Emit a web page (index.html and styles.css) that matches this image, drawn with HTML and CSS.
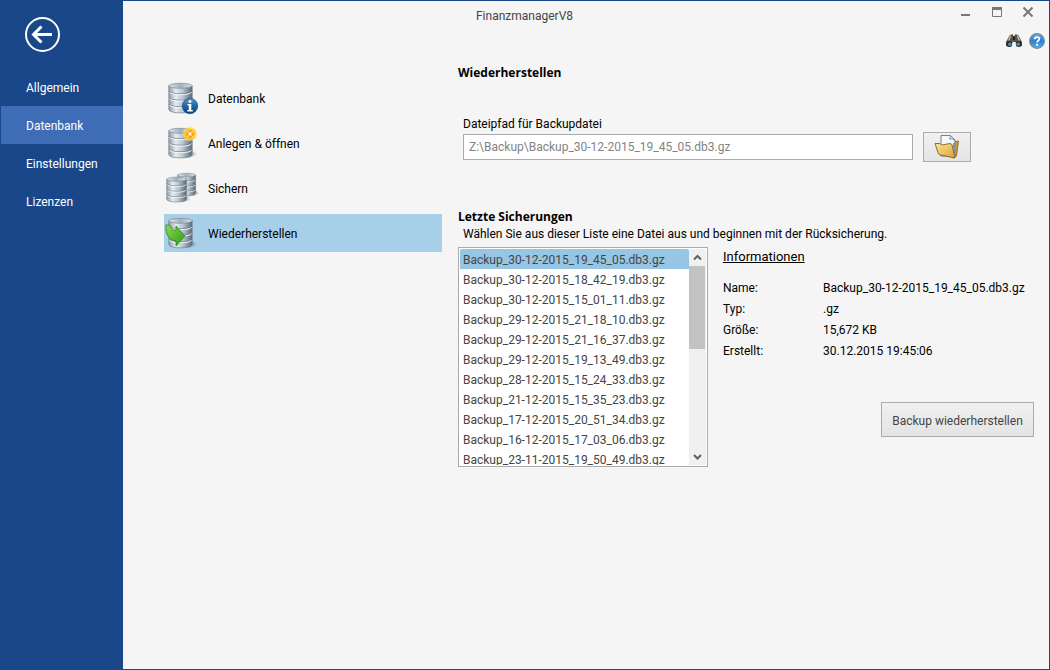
FILE: index.html
```html
<!DOCTYPE html>
<html lang="de">
<head>
<meta charset="utf-8">
<title>FinanzmanagerV8</title>
<link rel="stylesheet" href="styles.css">
</head>
<body>
<svg class="defs" aria-hidden="true">
  <defs>
    <linearGradient id="metal" x1="0" x2="1" y1="0" y2="0">
      <stop offset="0" stop-color="#8c9aa6"/>
      <stop offset=".3" stop-color="#e6ecf1"/>
      <stop offset=".6" stop-color="#b9c4cd"/>
      <stop offset="1" stop-color="#566877"/>
    </linearGradient>
    <linearGradient id="lid" x1="0" x2="1" y1="0" y2="0">
      <stop offset="0" stop-color="#dfe6eb"/>
      <stop offset=".5" stop-color="#9fb0bd"/>
      <stop offset="1" stop-color="#dde5ea"/>
    </linearGradient>
    <radialGradient id="shade">
      <stop offset="0" stop-color="#000" stop-opacity=".6"/>
      <stop offset="1" stop-color="#000" stop-opacity="0"/>
    </radialGradient>
    <radialGradient id="glow">
      <stop offset="0" stop-color="#ff9414"/>
      <stop offset=".4" stop-color="#ffa51c"/>
      <stop offset=".7" stop-color="#ffd23c" stop-opacity=".9"/>
      <stop offset="1" stop-color="#ffe873" stop-opacity="0"/>
    </radialGradient>
    <linearGradient id="blue" x1="0" x2="0" y1="0" y2="1">
      <stop offset="0" stop-color="#5c9bd0"/>
      <stop offset=".5" stop-color="#1d66a8"/>
      <stop offset="1" stop-color="#0e4278"/>
    </linearGradient>
    <linearGradient id="sky" x1="0" x2="0" y1="0" y2="1">
      <stop offset="0" stop-color="#69afe6"/>
      <stop offset=".5" stop-color="#2a7fcd"/>
      <stop offset="1" stop-color="#58b4f0"/>
    </linearGradient>
    <linearGradient id="green" x1="0" x2="1" y1="0" y2="1">
      <stop offset="0" stop-color="#8fdc4c"/>
      <stop offset="1" stop-color="#2c9a1c"/>
    </linearGradient>
    <linearGradient id="gold" x1="0" x2="1" y1="0" y2="1">
      <stop offset="0" stop-color="#ffe49a"/>
      <stop offset="1" stop-color="#d9a032"/>
    </linearGradient>
    <symbol id="drum" viewBox="0 0 26 32" overflow="visible">
      <ellipse cx="18" cy="27" rx="11" ry="4.500" fill="url(#shade)"/>
      <path d="M.8 3.500v24c0 4.500 23.400 4.500 23.400 0v-24z" fill="url(#metal)" stroke="#74838f" stroke-width=".7"/>
      <ellipse cx="12.500" cy="3.800" rx="11.600" ry="2.500" fill="url(#lid)" stroke="#7d8b97" stroke-width=".7"/>
      <path d="M1 9c0 3.600 23 3.600 23 0M1 15.500c0 3.600 23 3.600 23 0M1 22c0 3.600 23 3.600 23 0" fill="none" stroke="#657685" stroke-width=".7"/>
      <path d="M1.500 10c0 3.600 22 3.600 22 0M1.500 16.500c0 3.600 22 3.600 22 0M1.500 23c0 3.600 22 3.600 22 0" fill="none" stroke="#f8fbfd" stroke-width=".9"/>
    </symbol>
  </defs>
</svg>
<div class="window">
  <aside class="sidebar">
    <button class="back" type="button" aria-label="Zurück">
      <svg viewBox="0 0 36 36"><circle cx="18.500" cy="17.500" r="16.500"/><path d="M28 17.500H10.500M17.500 9.500l-8 8 8 8"/></svg>
    </button>
    <nav class="main-nav">
      <a href="#">Allgemein</a>
      <a href="#" class="active" aria-current="page">Datenbank</a>
      <a href="#">Einstellungen</a>
      <a href="#">Lizenzen</a>
    </nav>
  </aside>
  <div class="stage">
    <header class="titlebar">
      <div class="title">FinanzmanagerV8</div>
      <div class="controls">
        <div class="caption">
          <button type="button" aria-label="Minimieren"><svg viewBox="0 0 12 12"><path d="M1 8h9v2H1z" fill="#777"/></svg></button>
          <button type="button" aria-label="Maximieren"><svg viewBox="0 0 12 12"><path d="M1.500 1.500h9v9h-9z" fill="none" stroke="#777"/><path d="M1 1h10v3H1z" fill="#777"/></svg></button>
          <button type="button" aria-label="Schließen"><svg viewBox="0 0 12 12"><path d="M1.500 1.500l9 9M10.500 1.500l-9 9" stroke="#777" stroke-width="2"/></svg></button>
        </div>
        <div class="tools">
          <button type="button" aria-label="Suchen">
            <svg viewBox="0 0 16 16">
              <path d="M3.500 2.500l3-1.500 1 2h1l1-2 3 1.500L16 9v4l-5.500.500-1-4.500h-3l-1 4.500L0 13V9z" fill="#5a554c"/>
              <path d="M4.500 3L2.700 7.500M11.500 3l1.800 4.500" stroke="#c9c2b3" stroke-width="1.300"/>
              <path d="M7 3.500h2v3.500H7z" fill="#24221f"/>
              <circle cx="3.200" cy="11" r="3" fill="#2b2d2e"/><circle cx="12.800" cy="11" r="3" fill="#2b2d2e"/>
              <circle cx="3.800" cy="11.300" r="1.800" fill="#3f8fb8"/><circle cx="12.200" cy="11.300" r="1.800" fill="#3f8fb8"/>
            </svg>
          </button>
          <button type="button" aria-label="Hilfe">
            <svg viewBox="0 0 16 16">
              <circle cx="8" cy="8" r="7.300" fill="url(#sky)" stroke="#6f8798" stroke-width="1.300"/>
              <path d="M5.700 6.200C5.800 3.300 10.400 3.400 10.300 6c0 1.600-2.200 1.700-2.200 3.500" fill="none" stroke="#fff" stroke-width="1.800"/>
              <circle cx="8.100" cy="11.800" r="1.100" fill="#fff"/>
            </svg>
          </button>
        </div>
      </div>
    </header>
    <div class="body">
      <nav class="sub-nav">
        <a href="#">
          <svg viewBox="0 0 34 34"><use href="#drum" x="3" y="1" width="26" height="32"/><circle cx="25" cy="25" r="7.700" fill="url(#blue)" stroke="#0f406f" stroke-width=".6"/><path d="M22.500 23h3.800v6h1.500v1.500h-5.500V29h1.500v-4.500h-1.300z" fill="#fff"/><circle cx="25" cy="20.500" r="1.500" fill="#fff"/></svg>
          Datenbank</a>
        <a href="#">
          <svg viewBox="0 0 34 34"><use href="#drum" x="3" y="1" width="26" height="32"/><circle cx="25" cy="8" r="8" fill="url(#glow)"/><path d="M22 5l6 6M28 5l-6 6" stroke="#fff3c0" stroke-width=".8"/><circle cx="25" cy="8" r="1.400" fill="#fff"/></svg>
          Anlegen &amp; öffnen</a>
        <a href="#">
          <svg viewBox="0 0 34 34"><use href="#drum" x="12" y="1" width="20" height="25"/><use href="#drum" x="1" y="5" width="22" height="27"/></svg>
          Sichern</a>
        <a href="#" class="active" aria-current="page">
          <svg viewBox="0 0 34 34"><use href="#drum" x="3" y="1" width="26" height="32"/><path d="M1 9c2-.5 4 .5 5 2 1 2 2 3.500 5 3.500V10l9 10-9 10v-5C5 24.500 0 19 1 9z" fill="url(#green)" stroke="#27831a" stroke-width=".8"/></svg>
          Wiederherstellen</a>
      </nav>
      <main class="content">
        <h1>Wiederherstellen</h1>
        <section class="file">
          <label for="path">Dateipfad für Backupdatei</label>
          <div class="file-row">
            <input id="path" type="text" value="Z:\Backup\Backup_30-12-2015_19_45_05.db3.gz">
            <button class="btn browse" type="button" aria-label="Datei auswählen">
              <svg viewBox="0 0 26 26">
                <path d="M20 8l4.500-1-2 15-4 2z" fill="#cc9a3a" stroke="#85601f" stroke-width=".8"/>
                <path d="M7 1.500h9.500L21 6v16H7z" fill="#f5f9fc" stroke="#61798c" stroke-width=".9"/>
                <path d="M16 1.500c.5 2-.2 3-.5 3.500 2-.5 4 .2 5.500 2" fill="#d8e4ec" stroke="#61798c" stroke-width=".8"/>
                <path d="M19 9l2.500-.5v14L19 18z" fill="#8397a5"/>
                <path d="M1 9.500h5l1.500 1.500L16 9.500l2 1 3 13.500-15-3-1.500-1z" fill="url(#gold)" stroke="#85601f" stroke-width=".9"/>
              </svg>
            </button>
          </div>
        </section>
        <h2>Letzte Sicherungen</h2>
        <label class="hint" for="backups">Wählen Sie aus dieser Liste eine Datei aus und beginnen mit der Rücksicherung.</label>
        <div class="restore">
          <div class="listbox">
            <select id="backups" size="11">
              <option selected>Backup_30-12-2015_19_45_05.db3.gz</option>
              <option>Backup_30-12-2015_18_42_19.db3.gz</option>
              <option>Backup_30-12-2015_15_01_11.db3.gz</option>
              <option>Backup_29-12-2015_21_18_10.db3.gz</option>
              <option>Backup_29-12-2015_21_16_37.db3.gz</option>
              <option>Backup_29-12-2015_19_13_49.db3.gz</option>
              <option>Backup_28-12-2015_15_24_33.db3.gz</option>
              <option>Backup_21-12-2015_15_35_23.db3.gz</option>
              <option>Backup_17-12-2015_20_51_34.db3.gz</option>
              <option>Backup_16-12-2015_17_03_06.db3.gz</option>
              <option>Backup_23-11-2015_19_50_49.db3.gz</option>
            </select>
            <div class="scrollbar">
              <button type="button" aria-label="Nach oben"><svg viewBox="0 0 9 9"><path d="M1 6.500l3.500-3.500L8 6.500"/></svg></button>
              <div class="track"><div class="thumb"></div></div>
              <button type="button" aria-label="Nach unten"><svg viewBox="0 0 9 9"><path d="M1 3l3.500 3.500L8 3"/></svg></button>
            </div>
          </div>
          <section class="info">
            <h3>Informationen</h3>
            <dl>
              <dt>Name:</dt><dd>Backup_30-12-2015_19_45_05.db3.gz</dd>
              <dt>Typ:</dt><dd>.gz</dd>
              <dt>Größe:</dt><dd>15,672 KB</dd>
              <dt>Erstellt:</dt><dd>30.12.2015 19:45:06</dd>
            </dl>
            <button class="btn action" type="button">Backup wiederherstellen</button>
          </section>
        </div>
      </main>
    </div>
  </div>
</div>
</body>
</html>
```
FILE: styles.css
```css
* { box-sizing: border-box; }
body {
  margin: 0;
  font: 12px/16px Roboto, "Open Sans", sans-serif;
  color: #000;
}
button, input, select { font: inherit; }
button { padding: 0; border: 0; background: none; }
a { color: inherit; text-decoration: none; }
h1, h2, h3, dl, dd { margin: 0; }
svg { display: block; }
.defs { position: absolute; width: 0; height: 0; }

.window {
  display: flex;
  min-height: 100vh;
  border: 1px solid #1a478a;
  background: #f5f5f5;
}

.sidebar {
  flex: none;
  width: 122px;
  padding-top: 16px;
  background: #1a478a;
  color: #fff;
}
.back { display: block; width: 36px; height: 36px; margin-left: 23px; }
.back svg { fill: none; stroke: #fff; stroke-width: 2; }
.back path { stroke-width: 3; }
.main-nav { display: flex; flex-direction: column; margin-top: 15px; }
.main-nav a { padding: 12px 0 10px 25px; }
.main-nav .active { background: #3e6db5; }

.stage { flex: 1; min-width: 0; }
.titlebar { display: flex; height: 54px; color: #444; }
.title { flex: 1; padding-top: 7px; text-align: center; }
.controls { width: 123px; padding-right: 4px; }
.caption { display: flex; justify-content: flex-end; padding-right: 2px; }
.caption button { display: grid; place-items: center; width: 31px; height: 22px; }
.caption svg { width: 12px; height: 12px; }
.tools { display: flex; justify-content: flex-end; gap: 7px; margin-top: 10px; }
.tools svg { width: 16px; height: 16px; }

.body { display: flex; gap: 16px; padding: 0 15px 0 41px; }
.sub-nav { flex: none; display: flex; flex-direction: column; gap: 7px; width: 278px; padding-top: 24px; }
.sub-nav a { display: flex; align-items: center; gap: 9px; height: 38px; padding: 2px 0 0 1px; }
.sub-nav svg { width: 34px; height: 34px; margin-bottom: 2px; }
.sub-nav .active { background: #a8cfea; }

.content { flex: 1; min-width: 0; padding-top: 9px; }
h1, h2 { font: 700 12px/18px "Open Sans", sans-serif; }
.file { margin: 34px 0 46px; padding-left: 5px; }
.file label { display: block; }
.file-row { display: flex; align-items: center; gap: 10px; }
.file input {
  flex: 0 1 450px;
  min-width: 0;
  height: 26px;
  padding: 0 5px;
  border: 1px solid #ababab;
  background: #fff;
  color: #838383;
}
.btn {
  display: grid;
  place-items: center;
  border: 1px solid #ababab;
  background: linear-gradient(#f0f0f0, #e4e4e4);
  color: #444;
}
.browse { width: 48px; height: 30px; }
.browse svg { width: 26px; height: 26px; }
.hint { display: block; padding-left: 5px; }

.restore { display: flex; gap: 15px; margin-top: 5px; }
.listbox {
  flex: none;
  display: flex;
  width: 250px;
  height: 220px;
  padding: 1px;
  border: 1px solid #ababab;
  background: #fff;
}
.listbox select {
  flex: 1;
  min-width: 0;
  height: 216px;
  padding: 0;
  border: 0;
  outline: 0;
  background: #fff;
  color: #444;
  scrollbar-width: none;
}
.listbox option { height: 20px; min-height: 20px; padding: 4px 3px 2px; }
.listbox option:checked { background: linear-gradient(#97c5e4, #97c5e4); color: #444; }
.scrollbar { display: flex; flex-direction: column; width: 17px; padding-right: 1px; background: #f0f0f0; }
.scrollbar button { display: grid; place-items: center; height: 17px; }
.scrollbar svg { width: 9px; height: 9px; fill: none; stroke: #606060; stroke-width: 2; }
.track { flex: 1; }
.thumb { height: 83px; background: #c2c2c2; }

.info { flex: 1; min-width: 0; }
.info h3 { font-size: 13px; line-height: 20px; font-weight: 400; text-decoration: underline; }
.info dl { display: grid; grid-template-columns: 100px 1fr; margin-top: 11px; line-height: 21px; }
.action { width: 153px; height: 35px; margin: 40px 0 0 auto; padding-top: 2px; }
```
